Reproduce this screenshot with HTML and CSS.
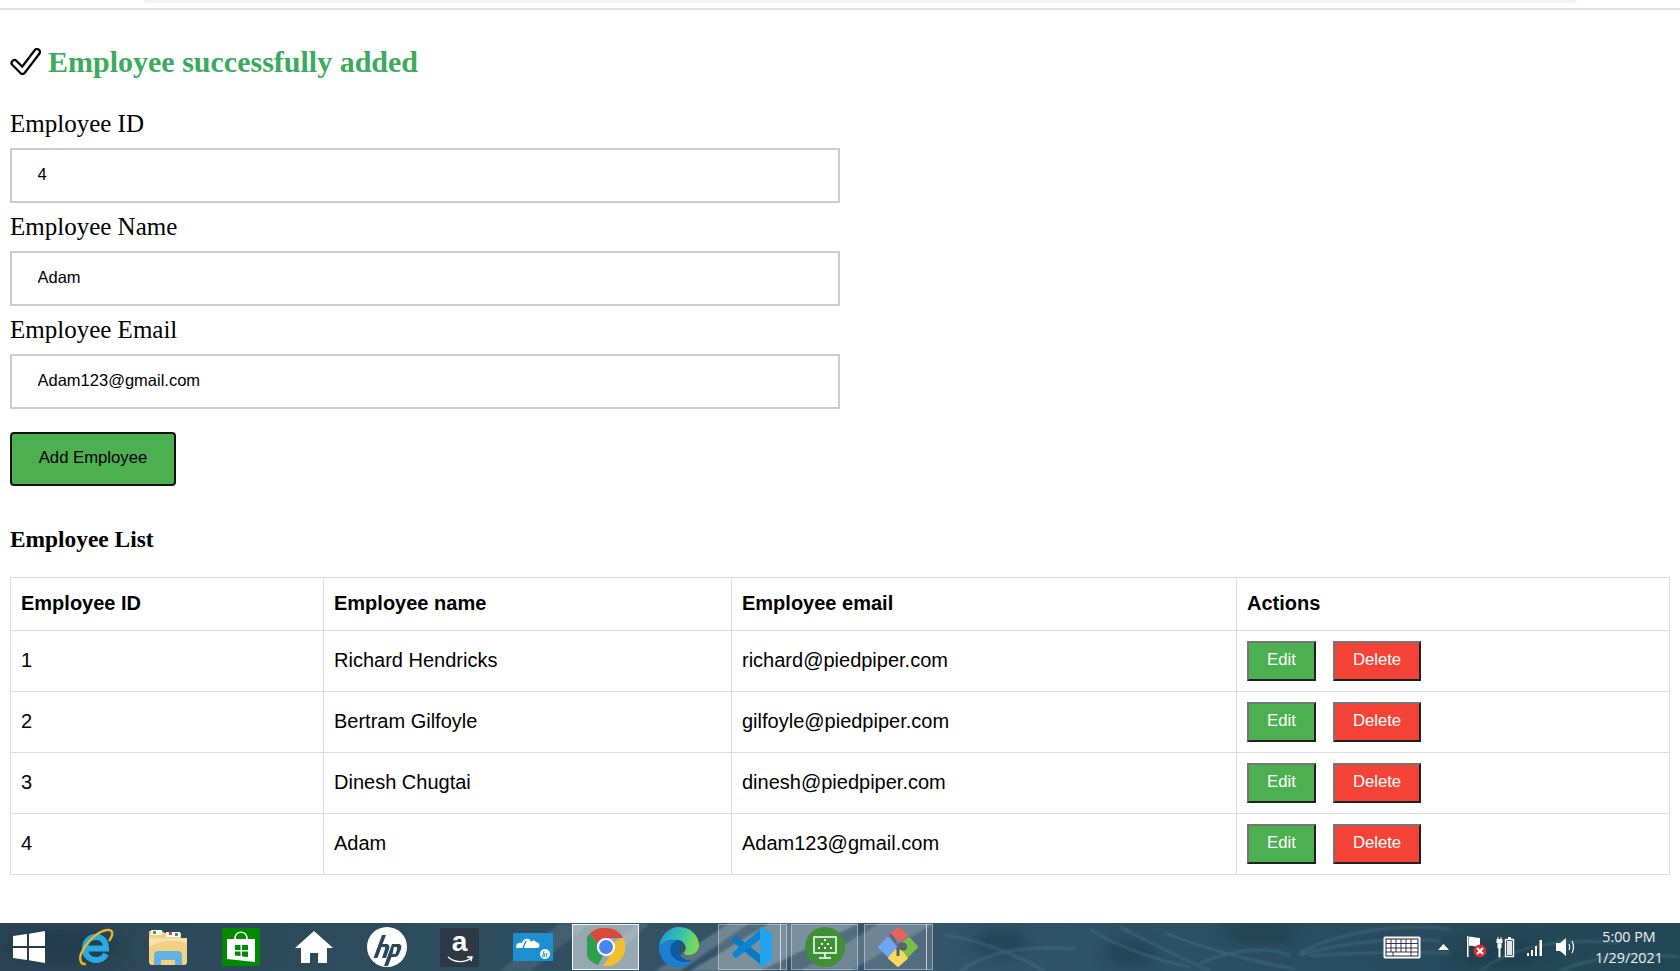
FILE: index.html
```html
<!DOCTYPE html>
<html lang="en">
<head>
  <meta charset="UTF-8">
  <title>Employee Manager</title>
  <link rel="stylesheet" href="styles.css">
</head>
<body>
  <div class="topbar"><div class="topbar-tab"></div></div>

  <main class="content">
    <h2 class="success">
      <svg class="check" viewBox="0 0 31 27" width="31" height="27">
        <path d="M4.5 15 L12.5 23 L27 4" fill="none" stroke="#000" stroke-width="8" stroke-linejoin="round" stroke-linecap="round"/>
        <path d="M4.5 15 L12.5 23 L27 4" fill="none" stroke="#fff" stroke-width="3.6" stroke-linejoin="round" stroke-linecap="round"/>
      </svg>
      Employee successfully added
    </h2>

    <form class="emp-form">
      <label for="emp-id">Employee ID</label>
      <input id="emp-id" type="text" value="4">
      <label for="emp-name">Employee Name</label>
      <input id="emp-name" type="text" value="Adam">
      <label for="emp-email">Employee Email</label>
      <input id="emp-email" type="text" value="Adam123@gmail.com">
      <button type="button" class="add-btn">Add Employee</button>
    </form>

    <h3 class="list-title">Employee List</h3>

    <table class="emp-table">
      <thead>
        <tr>
          <th class="col-id">Employee ID</th>
          <th class="col-name">Employee name</th>
          <th class="col-email">Employee email</th>
          <th>Actions</th>
        </tr>
      </thead>
      <tbody>
        <tr>
          <td>1</td><td>Richard Hendricks</td><td>richard@piedpiper.com</td>
          <td class="actions"><button class="edit">Edit</button><button class="delete">Delete</button></td>
        </tr>
        <tr>
          <td>2</td><td>Bertram Gilfoyle</td><td>gilfoyle@piedpiper.com</td>
          <td class="actions"><button class="edit">Edit</button><button class="delete">Delete</button></td>
        </tr>
        <tr>
          <td>3</td><td>Dinesh Chugtai</td><td>dinesh@piedpiper.com</td>
          <td class="actions"><button class="edit">Edit</button><button class="delete">Delete</button></td>
        </tr>
        <tr>
          <td>4</td><td>Adam</td><td>Adam123@gmail.com</td>
          <td class="actions"><button class="edit">Edit</button><button class="delete">Delete</button></td>
        </tr>
      </tbody>
    </table>
  </main>

  <footer class="taskbar">
    <!-- wallpaper showing through the taskbar -->
    <svg class="tb-wall" viewBox="0 0 1680 48" width="1680" height="48">
      <defs>
        <filter id="soft"><feGaussianBlur stdDeviation="1"/></filter>
        <filter id="softer"><feGaussianBlur stdDeviation="7"/></filter>
      </defs>
      <g fill="#173340" opacity="0.4" filter="url(#softer)">
        <ellipse cx="1000" cy="20" rx="30" ry="16"/>
        <ellipse cx="1130" cy="30" rx="26" ry="14"/>
        <ellipse cx="1260" cy="10" rx="40" ry="10"/>
        <ellipse cx="1500" cy="30" rx="50" ry="14"/>
        <ellipse cx="60" cy="24" rx="60" ry="20"/>
      </g>
      <g fill="#dfe8ee" filter="url(#soft)">
        <path d="M500 48 L560 0 H590 L530 48 Z" opacity="0.1"/>
        <path d="M655 48 L730 0 H750 L680 48 Z" opacity="0.22"/>
        <path d="M690 48 L770 0 H860 L760 48 Z" opacity="0.28"/>
        <path d="M800 48 L880 0 H935 L850 48 Z" opacity="0.2"/>
        <path d="M600 30 L640 0 H650 L610 36 Z" opacity="0.12"/>
      </g>
      <g fill="none" stroke="#6fa3b5" stroke-width="2" opacity="0.28" filter="url(#soft)">
        <path d="M945 12 C985 18 1020 34 1045 48"/>
        <path d="M960 48 C985 30 1020 22 1075 26"/>
        <path d="M1090 6 C1110 20 1150 36 1190 44"/>
        <path d="M1120 4 C1140 14 1170 30 1210 48"/>
        <path d="M1165 10 C1200 24 1250 38 1295 46"/>
        <path d="M1200 40 C1230 28 1260 22 1290 32"/>
        <path d="M1300 30 C1340 8 1400 0 1450 6"/>
        <path d="M1300 32 C1340 20 1390 14 1440 18"/>
        <path d="M1310 33 C1350 30 1400 28 1450 30"/>
        <path d="M1480 48 C1510 24 1560 14 1620 20"/>
        <path d="M1560 48 C1590 34 1630 30 1680 34"/>
      </g>
    </svg>

    <div class="tb-apps">
      <div class="tb-item tb-start">
        <svg viewBox="0 0 32 32" width="32" height="32">
          <path d="M0 5 L14 3 V15 H0 Z M16 2.7 L32 0 V15 H16 Z M0 17 H14 V29 L0 27 Z M16 17 H32 V32 L16 29.3 Z" fill="#fff"/>
        </svg>
      </div>
      <div class="tb-item">
        <svg viewBox="0 0 38 38" width="38" height="38">
          <path d="M10 20.5 H30 C30 12 25 9 20 9 C13 9 9 14 9 21 C9 28 14 32 20 32 C25 32 28 30 30 26" fill="none" stroke="#29aae3" stroke-width="6"/>
          <path d="M33 13 C38 6 37 1 31 2 C22 3 10 14 5 26 C3 32 5 37 10 36" fill="none" stroke="#e9b32a" stroke-width="2.4"/>
        </svg>
      </div>
      <div class="tb-item">
        <svg viewBox="0 0 40 40" width="40" height="40">
          <path d="M1 4 H14 L17 6 H33 V11 H39 V35 C39 37 38 38 36 38 H4 C2 38 1 37 1 35 Z" fill="#f1d181"/>
          <path d="M1 11 H39 V16 C26 13 12 13 1 20 Z" fill="#f7e3a6"/>
          <path d="M3 3 H14 V8 H3 Z" fill="#fff"/>
          <path d="M18 5 H32 V10 H18 Z" fill="#fff"/>
          <path d="M5 4 H8 V7 H5 Z" fill="#3da34b"/>
          <path d="M21 5 H24 V8 H21 Z" fill="#d8493a"/>
          <path d="M27 6 H30 V9 H27 Z" fill="#3d86c9"/>
          <path d="M6 38 V28 C6 25 8 24 10 24 H30 C32 24 34 25 34 28 V38 H27 V33 H13 V38 Z" fill="#63b1dc"/>
          <path d="M13 33 H27 V37 H13 Z" fill="#f1d181"/>
        </svg>
      </div>
      <div class="tb-item">
        <svg viewBox="0 0 38 38" width="38" height="38">
          <rect width="38" height="38" fill="#008a00"/>
          <path d="M5 11 H33 V34 L5 31 Z" fill="#fff"/>
          <path d="M13 11 C13 2 25 2 25 11" fill="none" stroke="#fff" stroke-width="1.6"/>
          <path d="M13 17 H18.5 V22 H13 Z M20 17 H26 V22 H20 Z M13 23.5 H18.5 V28 L13 27.5 Z M20 23.5 H26 V29 L20 28.5 Z" fill="#008a00"/>
        </svg>
      </div>
      <div class="tb-item">
        <svg viewBox="0 0 38 34" width="38" height="34">
          <path d="M19 1 L38 18 H32 V33 H23 V23 H15 V33 H6 V18 H0 Z" fill="#fff"/>
        </svg>
      </div>
      <div class="tb-item">
        <svg viewBox="0 0 40 40" width="40" height="40">
          <circle cx="20" cy="20" r="20" fill="#fff"/>
          <path d="M15 8 H19 L15.5 17 H19 C22 17 23 19 22 22 L19 31 H15 L18 22 C18.5 20.5 18 20 17 20 H14.5 L10.5 31 H6.5 Z" fill="#2d4759"/>
          <path d="M25 17 H31 C34 17 35 19 34 22 L32 27 C31 29 30 30 27 30 H24.5 L21 39 H17 Z M27 20 L25.5 27 H27 C28 27 28.7 26.5 29 25.5 L30 22 C30.3 20.7 30 20 29 20 Z" fill="#2d4759"/>
        </svg>
      </div>
      <div class="tb-item">
        <div class="amazon">
          <span class="amazon-a">a</span>
          <svg viewBox="0 0 26 8" width="26" height="8"><path d="M1 1 C8 7 18 7 24 2 M20 1 L25 1 L24 5" fill="none" stroke="#fff" stroke-width="1.4"/></svg>
        </div>
      </div>
      <div class="tb-item">
        <svg viewBox="0 0 40 28" width="40" height="28">
          <rect width="40" height="28" fill="#1b8fd0"/>
          <path d="M3 14 C3 10 7 9 9 10 C10 5 17 4 18 9 C19 7 22 7 23 9 C27 9 28 15 24 15 H6 C4 15 3 15 3 14 Z" fill="#fff"/>
          <path d="M13 8 L10 15" stroke="#1b8fd0" stroke-width="1.4"/>
          <circle cx="32" cy="21" r="5" fill="#fff"/>
          <path d="M31 18 L29.5 24 M32 20 L31 24 M34 20 L33 24" stroke="#1b8fd0" stroke-width="1"/>
        </svg>
      </div>
      <div class="tb-item tb-open tb-active">
        <svg viewBox="0 0 38 38" width="38" height="38">
          <path d="M19 0 A19 19 0 0 1 36 10 H19 A9 9 0 0 0 10.5 15 L3 5.5 A19 19 0 0 1 19 0 Z" fill="#d9483b"/>
          <path d="M3 5.5 L10.5 15 A9 9 0 0 0 16 27.5 L11 37 A19 19 0 0 1 3 5.5 Z" fill="#2f9e50"/>
          <path d="M36 10 A19 19 0 0 1 16 38 L24 26 A9 9 0 0 0 27 14 Z" fill="#f2c02f"/>
          <circle cx="19" cy="19" r="9" fill="#fff"/>
          <circle cx="19" cy="19" r="7" fill="#4a84ee"/>
        </svg>
      </div>
      <div class="tb-item">
        <svg viewBox="0 0 40 40" width="40" height="40">
          <defs>
            <linearGradient id="edge-top" x1="0" y1="0" x2="1" y2="0.3">
              <stop offset="0" stop-color="#1d8fd8"/>
              <stop offset="0.55" stop-color="#35c0b0"/>
              <stop offset="1" stop-color="#74da58"/>
            </linearGradient>
          </defs>
          <path d="M0 21 C1 8 10 0 20 0 C32 0 40 9 40 18 C40 25 34 28 29 28 C25 28 24 26 26 24 C28 21 26 14 19 13 C10 12 3 15 0 21 Z" fill="url(#edge-top)"/>
          <path d="M0 21 C3 15 10 12 19 13 C13 15 10 20 12 26 C15 35 27 37 34 33 C30 38 25 40 20 40 C8 40 0 32 0 21 Z" fill="#1a80d2"/>
          <path d="M19 13 C13 15 10 20 12 26 C15 35 27 37 34 33 C28 34 20 32 20 24 C20 20 21 15 25 16 C23 14 21 13 19 13 Z" fill="#0f5aa8"/>
        </svg>
      </div>
      <div class="tb-item tb-open tb-stack">
        <svg viewBox="0 0 40 40" width="40" height="40">
          <path d="M4 13 L30 34" stroke="#0a78c2" stroke-width="7" stroke-linecap="round"/>
          <path d="M4 27 L30 6" stroke="#0a85d4" stroke-width="7" stroke-linecap="round"/>
          <path d="M28 0 L40 6 V34 L28 40 Z" fill="#22a5ee"/>
        </svg>
      </div>
      <div class="tb-item tb-open">
        <svg viewBox="0 0 40 40" width="40" height="40">
          <circle cx="20" cy="20" r="20" fill="#3f8f35"/>
          <rect x="9" y="10" width="22" height="16" fill="none" stroke="#fff" stroke-width="1.5"/>
          <path d="M20 26 V31 M14 31 H26" stroke="#fff" stroke-width="1.5"/>
          <path d="M19 12 H21 V14 H19 Z M16 16 H18 V18 H16 Z M22 16 H24 V18 H22 Z M13 20 H15 V22 H13 Z M19 20 H21 V22 H19 Z M25 20 H27 V22 H25 Z" fill="#fff"/>
        </svg>
      </div>
      <div class="tb-item tb-open tb-stack">
        <svg viewBox="0 0 40 40" width="40" height="40">
          <path d="M10 11 L18 20 L10 29 L1 20 Z" fill="#6ea6f8" stroke="#6ea6f8" stroke-width="2" stroke-linejoin="round"/>
          <path d="M20 1 L29 8 L22 14 L14 6 Z" fill="#e8645c" stroke="#e8645c" stroke-width="2" stroke-linejoin="round"/>
          <path d="M31 11 L39 20 L30 29 L24 24 A4.5 4.5 0 0 0 25 15 Z" fill="#79bf45" stroke="#79bf45" stroke-width="2" stroke-linejoin="round"/>
          <path d="M18 23 V28 H22 V23 L29 31 L20 39 L11 31 Z" fill="#f6d760" stroke="#f6d760" stroke-width="2" stroke-linejoin="round"/>
          <path d="M12 7 L18 16" stroke="#55626b" stroke-width="2"/>
          <circle cx="25" cy="19.5" r="3" fill="none" stroke="#55626b" stroke-width="2"/>
          <path d="M20 22 V29" stroke="#55626b" stroke-width="3"/>
        </svg>
      </div>
    </div>

    <div class="tb-tray">
      <svg class="tray-kbd" viewBox="0 0 38 23" width="38" height="23">
        <rect x="0.5" y="0.5" width="37" height="22" rx="1.5" fill="#fff"/>
        <rect x="3" y="3" width="32" height="17" fill="none" stroke="#223" stroke-width="1"/>
        <path d="M3 7.5 H35 M3 12 H35 M3 16 H35 M8 3 V16 M13 3 V16 M18 3 V16 M23 3 V16 M28 3 V16 M10 16 V20 M28 16 V20" stroke="#223" stroke-width="0.9" fill="none"/>
      </svg>
      <svg class="tray-arrow" viewBox="0 0 11 6" width="11" height="6"><path d="M5.5 0 L11 6 H0 Z" fill="#fff"/></svg>
      <svg class="tray-flag" viewBox="0 0 20 22" width="20" height="22">
        <path d="M1 0 H2.5 V21 H1 Z M3 1 C7 0 9 2 14 2 V11 C9 11 7 9 3 10 Z" fill="#fff"/>
        <circle cx="14" cy="15" r="6.5" fill="#d22f2f"/>
        <path d="M11 12 L17 18 M17 12 L11 18" stroke="#fff" stroke-width="2"/>
      </svg>
      <svg class="tray-batt" viewBox="0 0 19 22" width="19" height="22">
        <path d="M1 3 V7 H6 V3 M2 8 H5 V12 H4 V21 H3 V12 H2 Z M2 1 V3 M5 1 V3" fill="#fff" stroke="#fff" stroke-width="1"/>
        <rect x="9.5" y="3.5" width="8" height="17" fill="none" stroke="#fff" stroke-width="1.4"/>
        <rect x="12" y="1" width="3" height="2" fill="#fff"/>
        <rect x="11" y="5" width="5" height="14" fill="#dfe7ea"/>
      </svg>
      <svg class="tray-signal" viewBox="0 0 16 17" width="16" height="17">
        <path d="M0 14 H2 V17 H0 Z M4 11 H6 V17 H4 Z M8 7 H10 V17 H8 Z M12.5 1 H15 V17 H12.5 Z" fill="#fff"/>
      </svg>
      <svg class="tray-vol" viewBox="0 0 20 20" width="20" height="20">
        <path d="M0 6 H4 L10 1 V19 L4 14 H0 Z" fill="#fff"/>
        <path d="M13 7 C14 9 14 11 13 13 M16 4 C18 8 18 12 16 16" stroke="#fff" stroke-width="1.2" fill="none"/>
      </svg>
      <div class="tray-clock"><span>5:00 PM</span><span>1/29/2021</span></div>
    </div>
  </footer>
</body>
</html>
```

FILE: styles.css
```css
* {
  box-sizing: border-box;
}

html, body {
  height: 100%;
}

body {
  margin: 0;
  display: flex;
  flex-direction: column;
  background-color: #fff;
  font-family: "Liberation Serif", serif;
  color: #000;
  overflow: hidden;
}

.topbar {
  height: 10px;
  border-bottom: 2px solid #dfe1e5;
  padding: 0 103px 0 144px;
}

.topbar-tab {
  height: 3px;
  background-color: #f1f3f4;
  border-radius: 0 0 6px 6px;
}

.content {
  flex: 1;
  padding: 0 11px 0 10px;
}

.success {
  display: flex;
  align-items: center;
  gap: 7px;
  margin: 32px 0 0;
  height: 40px;
  font-size: 30px;
  font-weight: bold;
  color: #3cab5e;
}

.check {
  margin-top: -2px;
}

.emp-form {
  display: flex;
  flex-direction: column;
  align-items: flex-start;
  margin-top: 29px;
}

label {
  font-size: 25px;
  line-height: 25px;
  height: 27px;
  margin-bottom: 10px;
}

input {
  width: 830px;
  height: 55px;
  padding: 0 26px 2px 25.5px;
  border: 2px solid #ccc;
  font-family: "Liberation Sans", sans-serif;
  font-size: 16.5px;
  color: #000;
  margin-bottom: 11px;
  outline: none;
}

.add-btn {
  width: 166px;
  height: 54px;
  margin-top: 12px;
  padding-bottom: 4px;
  background-color: #4caf50;
  border: 2px solid #111;
  border-radius: 4px;
  font-family: "Liberation Sans", sans-serif;
  font-size: 16.7px;
  color: #000;
}

.list-title {
  margin: 41px 0 0;
  font-size: 23.4px;
  line-height: 25px;
  height: 27px;
  font-weight: bold;
}

.emp-table {
  width: 1660px;
  margin-top: 23px;
  border-collapse: collapse;
  font-family: "Liberation Sans", sans-serif;
  font-size: 20px;
  text-align: left;
}

.emp-table th,
.emp-table td {
  border: 1px solid #ddd;
  padding: 0 10px 2px;
}

.emp-table th {
  height: 53px;
}

.emp-table td {
  height: 61px;
}

.emp-table td.actions {
  padding-bottom: 0;
}

.col-id {
  width: 313px;
}

.col-name {
  width: 408px;
}

.col-email {
  width: 505px;
}

.edit,
.delete {
  height: 40px;
  padding-bottom: 3px;
  border: 2px outset #767676;
  font-family: "Liberation Sans", sans-serif;
  font-size: 16.7px;
  color: #fff;
  vertical-align: middle;
}

.edit {
  width: 69px;
  background-color: #4caf50;
  margin-right: 17px;
}

.delete {
  width: 88px;
  background-color: #f44336;
}

.taskbar {
  height: 48px;
  position: relative;
  display: flex;
  justify-content: space-between;
  background-image: linear-gradient(90deg, #2c4557, #2e4e5f 30%, #37566c 50%, #2a4e60 75%, #234656);
}

.tb-wall {
  position: absolute;
  top: 0;
  left: 0;
}

.tb-apps {
  position: relative;
  display: flex;
}

.tb-item {
  width: 73px;
  height: 48px;
  display: flex;
  align-items: center;
  justify-content: center;
  flex: none;
  position: relative;
}

.tb-start {
  width: 58px;
}

.tb-open::before {
  content: "";
  position: absolute;
  top: 1px;
  bottom: 1px;
  left: 3px;
  right: 3px;
  background-color: rgba(255, 255, 255, 0.14);
  border: 1px solid rgba(255, 255, 255, 0.38);
}

.tb-stack::before {
  right: 7px;
}

.tb-stack::after {
  content: "";
  position: absolute;
  top: 1px;
  bottom: 1px;
  right: 1px;
  width: 5px;
  background-color: rgba(255, 255, 255, 0.14);
  border: 1px solid rgba(255, 255, 255, 0.38);
}

.tb-active::before {
  background-color: rgba(255, 255, 255, 0.5);
  border: 1px solid #f4f6f7;
}

.tb-item svg {
  position: relative;
}

.amazon {
  width: 39px;
  height: 39px;
  background-color: #2d3a45;
  border-radius: 2px;
  display: flex;
  flex-direction: column;
  align-items: center;
  color: #fff;
}

.amazon-a {
  font-family: "Liberation Sans", sans-serif;
  font-weight: bold;
  font-size: 28px;
  line-height: 28px;
}

.tb-tray {
  position: relative;
  display: flex;
  align-items: center;
  padding-right: 7px;
  color: #fff;
}

.tray-arrow {
  margin-left: 17px;
}

.tray-flag {
  margin-left: 17px;
}

.tray-batt {
  margin-left: 10px;
}

.tray-signal {
  margin-left: 12px;
}

.tray-vol {
  margin-left: 13px;
}

.tray-clock {
  width: 88px;
  margin-left: 9px;
  display: flex;
  flex-direction: column;
  align-items: center;
  gap: 3px;
  font-family: "Open Sans", sans-serif;
  font-size: 14.3px;
  line-height: 18px;
  color: #eef2f4;
}
```
